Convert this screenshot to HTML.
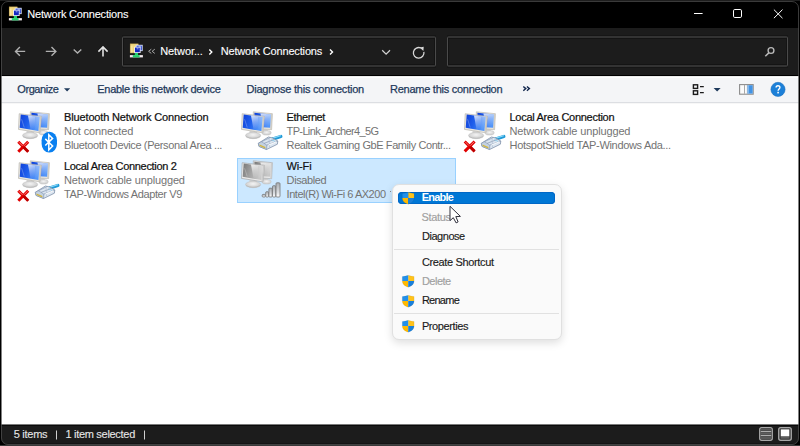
<!DOCTYPE html>
<html><head><meta charset="utf-8">
<style>
html,body{margin:0;padding:0;}
body{width:800px;height:446px;position:relative;overflow:hidden;background:#000000;font-family:"Liberation Sans",sans-serif;}
.t{position:absolute;white-space:nowrap;line-height:11px;font-family:"Liberation Sans",sans-serif;}
.abs{position:absolute;}
#clip{position:absolute;left:0;top:0;width:800px;height:446px;clip-path:inset(1px 1px 1px 1px round 7px);}
svg{position:absolute;overflow:visible;}
</style></head>
<body>
<svg width="0" height="0" style="position:absolute">
 <defs>
  <linearGradient id="scr" x1="0" y1="0" x2="1" y2="0.3">
   <stop offset="0" stop-color="#1040d8"/>
   <stop offset="0.5" stop-color="#1f5fec"/>
   <stop offset="1" stop-color="#4a90f8"/>
  </linearGradient>
  <linearGradient id="scrg" x1="0" y1="0" x2="1" y2="0.3">
   <stop offset="0" stop-color="#777777"/>
   <stop offset="0.5" stop-color="#a2a2a2"/>
   <stop offset="1" stop-color="#c4c4c4"/>
  </linearGradient>
  <linearGradient id="glare" x1="0" y1="0" x2="0.25" y2="1">
   <stop offset="0" stop-color="#ffffff" stop-opacity="0.85"/>
   <stop offset="0.5" stop-color="#ffffff" stop-opacity="0.4"/>
   <stop offset="1" stop-color="#ffffff" stop-opacity="0.05"/>
  </linearGradient>
  <linearGradient id="glare2" x1="0" y1="0" x2="0" y2="1">
   <stop offset="0" stop-color="#ffffff" stop-opacity="0.45"/>
   <stop offset="1" stop-color="#ffffff" stop-opacity="0.0"/>
  </linearGradient>
  <linearGradient id="frm" x1="0" y1="0" x2="0" y2="1">
   <stop offset="0" stop-color="#f2f2f2"/>
   <stop offset="1" stop-color="#cfcfcf"/>
  </linearGradient>
  <radialGradient id="stand" cx="0.5" cy="0.4" r="0.6">
   <stop offset="0" stop-color="#f4f4f4"/>
   <stop offset="1" stop-color="#c8c8c8"/>
  </radialGradient>
  <linearGradient id="bar" x1="0" y1="0" x2="0" y2="1">
   <stop offset="0" stop-color="#a9adb2"/>
   <stop offset="0.7" stop-color="#dde0e3"/>
   <stop offset="1" stop-color="#ffffff"/>
  </linearGradient>
  <g id="mons">
   <!-- back stand -->
   <path d="M22.5,18 L26.5,18.3 L27,20.8 L22,20.8 Z" fill="#d2d2d2"/>
   <ellipse cx="25.6" cy="21.8" rx="4.6" ry="2.3" fill="url(#stand)" stroke="#c4c4c4" stroke-width="0.5"/>
   <!-- back monitor -->
   <polygon points="12.3,0.8 31.4,2.7 30.6,18.7 12.3,17.5" fill="#e6e4de" stroke="#b3b0a8" stroke-width="0.6"/>
   <polygon points="30,2.6 31.4,2.7 30.6,18.7 29.3,18.5" fill="#cfccc4"/>
   <polygon points="13.4,1.7 29.9,3.5 29.1,16.8 13.5,15.8" fill="url(#scr)"/>
   <polygon points="19.5,2.4 29.9,3.5 29.1,16.8 21.5,16.3" fill="url(#glare)"/>
   <!-- front stand -->
   <path d="M8.6,20 L16,20.7 L16.4,23 L8.4,22.8 Z" fill="#d4d4d4"/>
   <ellipse cx="12.1" cy="24.5" rx="7.6" ry="3.2" fill="url(#stand)" stroke="#c2c2c2" stroke-width="0.5"/>
   <path d="M5,25.6 Q12.1,29 19.2,25.6" stroke="#b6b6b6" stroke-width="0.7" fill="none"/>
   <!-- front monitor -->
   <polygon points="1.2,2.7 23.4,5.4 21.8,21.8 0.5,18.4" fill="#e9e7e1" stroke="#aeaba3" stroke-width="0.6"/>
   <polygon points="21.9,5.3 23.4,5.4 21.8,21.8 20.4,21.6" fill="#cdcac2"/>
   <polygon points="2.7,3.6 21.6,6.1 20.4,20.1 1.7,16.8" fill="url(#scr)"/>
   <polygon points="10,4.6 17.5,5.6 16.8,19.6 12.6,18.9" fill="url(#glare)"/>
   <polygon points="17.5,5.6 21.6,6.1 20.4,20.1 16.8,19.6" fill="url(#glare2)"/>
   <path d="M3.6,8.2 L6.2,16.4" stroke="#ffffff" stroke-width="0.7" opacity="0.35"/>
  </g>
  <g id="monsg">
   <!-- back stand -->
   <path d="M22.5,18 L26.5,18.3 L27,20.8 L22,20.8 Z" fill="#d2d2d2"/>
   <ellipse cx="25.6" cy="21.8" rx="4.6" ry="2.3" fill="url(#stand)" stroke="#c4c4c4" stroke-width="0.5"/>
   <!-- back monitor -->
   <polygon points="12.3,0.8 31.4,2.7 30.6,18.7 12.3,17.5" fill="#e8e8e8" stroke="#a2a2a2" stroke-width="0.6"/>
   <polygon points="30,2.6 31.4,2.7 30.6,18.7 29.3,18.5" fill="#cccccc"/>
   <polygon points="13.4,1.7 29.9,3.5 29.1,16.8 13.5,15.8" fill="url(#scrg)"/>
   <polygon points="19.5,2.4 29.9,3.5 29.1,16.8 21.5,16.3" fill="url(#glare)"/>
   <!-- front stand -->
   <path d="M8.6,20 L16,20.7 L16.4,23 L8.4,22.8 Z" fill="#d4d4d4"/>
   <ellipse cx="12.1" cy="24.5" rx="7.6" ry="3.2" fill="url(#stand)" stroke="#c2c2c2" stroke-width="0.5"/>
   <path d="M5,25.6 Q12.1,29 19.2,25.6" stroke="#b6b6b6" stroke-width="0.7" fill="none"/>
   <!-- front monitor -->
   <polygon points="1.2,2.7 23.4,5.4 21.8,21.8 0.5,18.4" fill="#ececec" stroke="#9c9c9c" stroke-width="0.6"/>
   <polygon points="21.9,5.3 23.4,5.4 21.8,21.8 20.4,21.6" fill="#cacaca"/>
   <polygon points="2.7,3.6 21.6,6.1 20.4,20.1 1.7,16.8" fill="url(#scrg)"/>
   <polygon points="10,4.6 17.5,5.6 16.8,19.6 12.6,18.9" fill="url(#glare)"/>
   <polygon points="17.5,5.6 21.6,6.1 20.4,20.1 16.8,19.6" fill="url(#glare2)"/>
   <path d="M3.6,8.2 L6.2,16.4" stroke="#ffffff" stroke-width="0.7" opacity="0.35"/>
  </g>

  <g id="xmark">
   <path d="M1.3,1.3 L11.2,11.2 M11.2,1.3 L1.3,11.2" stroke="#ffffff" stroke-width="4.2" opacity="0.6"/>
   <path d="M1.3,1.3 L11.2,11.2 M11.2,1.3 L1.3,11.2" stroke="#e10000" stroke-width="3"/>
   <path d="M6.6,6.6 L11.2,11.2" stroke="#b80000" stroke-width="2.2"/>
   <path d="M1.9,1.7 L5.6,5.4 M10.6,1.7 L6.9,5.4" stroke="#ffb0b0" stroke-width="0.8" opacity="0.85"/>
  </g>
  <g id="plug">
   <path d="M31.5,28.6 L39.8,26.0" stroke="#1f9ad8" stroke-width="3.4" stroke-linecap="round"/>
   <path d="M32,27.6 L39.6,25.3" stroke="#8bd8f8" stroke-width="1.1" stroke-linecap="round"/>
   <polygon points="17.3,32.8 27.4,26.5 31.4,27.4 36.8,30.5 36.4,33.7 25.6,39 18,35.9" fill="#dbe5f0" stroke="#7b8ca5" stroke-width="0.75"/>
   <polygon points="17.3,32.8 20.5,31.2 25.8,34.6 25.6,39 18,35.9" fill="#c3d1e2" stroke="#7386a2" stroke-width="0.5"/>
   <polygon points="18.5,34.0 24.4,36.4 24.3,38.0 18.6,35.6" fill="#d2b640"/>
   <path d="M20.5,31.2 L29.2,27 M25.8,34.6 L36.8,30.5 M23,32.9 L33.5,28.8" stroke="#8596b0" stroke-width="0.7" fill="none"/>
   <path d="M28,28 L28.6,36.6" stroke="#a9b8cc" stroke-width="0.6"/>
   <path d="M27.5,34.5 L35.5,31.2" stroke="#ffffff" stroke-width="1.1" opacity="0.9"/>
   <path d="M30.3,29.2 L34,30.9" stroke="#6fc6ec" stroke-width="0.8" opacity="0.8"/>
  </g>
  <g id="shield">
   <path d="M6.2,0.3 Q9,1.3 12.1,1.5 L12.1,6 L6.2,6 Z" fill="#ffc21a"/>
   <path d="M6.2,0.3 Q3.4,1.3 0.3,1.5 L0.3,6 L6.2,6 Z" fill="#2290ea"/>
   <path d="M6.2,6 L0.3,6 C0.4,9.4 2.8,11.1 6.2,12.2 Z" fill="#ffb900"/>
   <path d="M6.2,6 L12.1,6 C12,9.4 9.6,11.1 6.2,12.2 Z" fill="#1a80da"/>
   <path d="M6.2,0.3 Q9,1.3 12.1,1.5 L12.1,6 C12,9.4 9.6,11.1 6.2,12.2 C2.8,11.1 0.4,9.4 0.3,6 L0.3,1.5 Q3.4,1.3 6.2,0.3 Z" fill="none" stroke="#000" stroke-opacity="0.12" stroke-width="0.5"/>
  </g>
  <g id="netico">
   <rect x="0.2" y="-0.1" width="8" height="9" fill="#f0d67e" stroke="#cfae55" stroke-width="0.5"/>
   <rect x="0.6" y="1.6" width="2" height="7" fill="#fbeaa8" opacity="0.7"/>
   <rect x="5.7" y="0.8" width="7" height="6.3" fill="#d7e0f4"/>
   <rect x="6.6" y="1.7" width="5.3" height="4.6" fill="#2f47d3"/>
   <rect x="8.6" y="2.1" width="2.6" height="1.4" fill="#8fa3ee"/>
   <rect x="4.2" y="2.8" width="6.4" height="6.2" fill="#eef2fb"/>
   <rect x="5" y="3.6" width="4.8" height="4.6" fill="#1428c0"/>
   <rect x="6.7" y="4.0" width="1.8" height="1.4" fill="#6f86e8"/>
   <rect x="4.8" y="9" width="3.2" height="2.3" fill="#22d06c"/>
   <rect x="-0.1" y="11.1" width="13" height="2.3" fill="#f2eaee"/>
   <rect x="2.8" y="11.1" width="6.8" height="2.3" fill="#22d06c"/>
  </g>
 </defs>
</svg>

<div id="clip">
 <!-- title bar -->
 <div class="abs" style="left:0;top:0;width:800px;height:28px;background:#000000"></div>
 <!-- nav bar -->
 <div class="abs" style="left:0;top:28px;width:800px;height:47px;background:#1c1c1c"></div>
 <div class="abs" style="left:0;top:75px;width:800px;height:1px;background:#000000"></div>
 <!-- toolbar -->
 <div class="abs" style="left:0;top:76px;width:800px;height:26px;background:#f4f5f7;border-bottom:1px solid #dcdee2"></div>
 <div class="abs" style="left:0;top:76px;width:800px;height:1px;background:#ececec"></div>
 <div class="abs" style="left:0;top:77px;width:800px;height:1px;background:#fdfdfd"></div>
 <!-- content -->
 <div class="abs" style="left:0;top:103px;width:800px;height:321px;background:#ffffff"></div>
 <div class="abs" style="left:0;top:103px;width:800px;height:1px;background:#f7f7f7"></div>
 <!-- status bar -->
 <div class="abs" style="left:0;top:424px;width:800px;height:22px;background:#1c1c1c"></div>
 <div class="abs" style="left:0;top:424px;width:800px;height:1px;background:#7a7a7a"></div>
 <div class="abs" style="left:0;top:425px;width:800px;height:1px;background:#0a0a0a"></div>
 <div class="abs" style="left:0;top:443px;width:800px;height:1px;background:#151515"></div>

 <!-- title icon -->
 <svg style="left:9px;top:7px" width="14" height="14"><use href="#netico"/></svg>
 <!-- window controls -->
 <svg style="left:0;top:0" width="800" height="28">
  <line x1="694" y1="13.5" x2="702.6" y2="13.5" stroke="#ffffff" stroke-width="1"/>
  <rect x="733.5" y="9.5" width="8" height="8" rx="1.3" fill="none" stroke="#ffffff" stroke-width="1"/>
  <path d="M773.9,9.6 L782.5,18.2 M782.5,9.6 L773.9,18.2" stroke="#ffffff" stroke-width="1"/>
 </svg>

 <!-- nav icons -->
 <svg style="left:0;top:28px" width="800" height="48">
  <g transform="translate(0,-28)">
   <path d="M15.6,51.4 L25.2,51.4 M19.9,47 L15.5,51.4 L19.9,55.8" stroke="#b0b0b0" stroke-width="1.4" fill="none"/>
   <path d="M45.8,51.4 L55.8,51.4 M51.5,47 L55.9,51.4 L51.5,55.8" stroke="#b0b0b0" stroke-width="1.4" fill="none"/>
   <path d="M73.7,49.4 L77.5,53.1 L81.3,49.4" stroke="#b0b0b0" stroke-width="1.4" fill="none"/>
   <path d="M103,47.2 L103,56.6 M98.4,51.6 L103,47 L107.6,51.6" stroke="#e2e2e2" stroke-width="1.6" fill="none"/>
   <!-- address box -->
   <rect x="122" y="35" width="314" height="1" fill="#161616"/>
   <rect x="122" y="67" width="314" height="1" fill="#161616"/>
   <rect x="122.5" y="37" width="313" height="29" rx="1" fill="#1c1c1c" stroke="#4a4a4a" stroke-width="1"/>
   <rect x="123.5" y="38.5" width="311" height="26" fill="none" stroke="#141414" stroke-width="1"/>
   <!-- search box -->
   <rect x="447" y="35" width="341" height="1" fill="#161616"/>
   <rect x="447" y="67" width="341" height="1" fill="#161616"/>
   <rect x="447.5" y="37" width="340" height="29" rx="1" fill="#1c1c1c" stroke="#4a4a4a" stroke-width="1"/>
   <rect x="448.5" y="38.5" width="338" height="26" fill="none" stroke="#141414" stroke-width="1"/>
   <!-- << -->
   <path d="M151.3,49.2 L148.6,51.3 L151.3,53.4 M154.8,49.2 L152.1,51.3 L154.8,53.4" stroke="#a8a8a8" stroke-width="1" fill="none"/>
   <!-- > separators -->
   <path d="M209.3,49.6 L211.8,52 L209.3,54.4" stroke="#ffffff" stroke-width="1.4" fill="none"/>
   <path d="M330,49.6 L332.5,52 L330,54.4" stroke="#ffffff" stroke-width="1.4" fill="none"/>
   <!-- dropdown -->
   <path d="M382.2,50.3 L386.1,54.1 L390,50.3" stroke="#d0d0d0" stroke-width="1.3" fill="none"/>
   <!-- refresh -->
   <path d="M420.9,48.0 A5.3,5.3 0 1 0 423.9,51.9" stroke="#d8d8d8" stroke-width="1.3" fill="none"/>
   <path d="M419.6,47.4 L423.7,46.7 L423.4,50.9 Z" fill="#d8d8d8"/>
   <!-- search -->
   <circle cx="771" cy="50.5" r="2.9" stroke="#b8b8b8" stroke-width="1.4" fill="none"/>
   <path d="M769,52.6 L765.3,56.3" stroke="#b8b8b8" stroke-width="1.5"/>
  </g>
 </svg>
 <svg style="left:130px;top:43.7px" width="14" height="14"><use href="#netico"/></svg>

 <!-- toolbar icons -->
 <svg style="left:0;top:76px" width="800" height="26">
  <g transform="translate(0,-76)">
   <path d="M64,88.3 L70.2,88.3 L67.1,91.4 Z" fill="#1e395b"/>
   <path d="M523.3,86.5 L525.8,88.6 L523.3,90.8 M526.9,86.5 L529.4,88.6 L526.9,90.8" stroke="#13284e" stroke-width="1.4" fill="none"/>
   <!-- view icon -->
   <rect x="693.4" y="84.8" width="4.2" height="3.6" fill="none" stroke="#1a1a1a" stroke-width="1.4"/>
   <rect x="693.4" y="90.8" width="4.2" height="3.6" fill="none" stroke="#1a1a1a" stroke-width="1.4"/>
   <line x1="700" y1="86.6" x2="703.8" y2="86.6" stroke="#1a1a1a" stroke-width="1.2"/>
   <line x1="700" y1="92.6" x2="703.8" y2="92.6" stroke="#1a1a1a" stroke-width="1.2"/>
   <path d="M713.6,88 L720.6,88 L717.1,91.5 Z" fill="#1e395b"/>
   <!-- preview pane -->
   <rect x="739.6" y="84.6" width="13.6" height="9.6" fill="#fbfbfb" stroke="#8c8c8c" stroke-width="1.1"/>
   <rect x="744" y="85" width="1" height="8.8" fill="#a8a8a8"/>
   <rect x="746.9" y="85" width="0.8" height="8.8" fill="#a8a8a8"/>
   <rect x="747.6" y="85.2" width="5.1" height="8.4" fill="#4293e4"/>
   <rect x="747.6" y="85.2" width="1.2" height="8.4" fill="#8fc0f0"/>
   <!-- help -->
   <circle cx="778" cy="89.4" r="7.1" fill="#1c80d8"/>
   <circle cx="778" cy="89.4" r="7.1" fill="none" stroke="#1568b8" stroke-width="0.5"/>
   <path d="M776.1,87.5 C776.1,85.2 779.9,85.2 779.9,87.4 C779.9,89 778.1,89 778.1,90.8" stroke="#ffffff" stroke-width="1.4" fill="none"/>
   <rect x="777.3" y="91.8" width="1.6" height="1.6" fill="#ffffff"/>
  </g>
 </svg>

 <!-- selection -->
 <div class="abs" style="left:237px;top:158px;width:217px;height:43px;background:#cce8ff;border:1px solid #99d1ff"></div>

 <!-- item icons -->
 <svg style="left:18px;top:110.5px" width="45" height="45"><use href="#mons" transform="translate(0,0)"/><use href="#xmark" transform="translate(-1,29.5)"/><g transform="translate(0,-0.5)"><g id="bt"><rect x="23.6" y="21.2" width="15.4" height="20.7" rx="7.4" ry="8.6" fill="#0a80f0"/>
<path d="M27.3,28.4 L34.6,35.5 L30.8,39.4 L30.8,24.2 L34.6,27.9 L27.3,35" stroke="#ffffff" stroke-width="1.5" fill="none" stroke-linejoin="miter" stroke-miterlimit="6"/></g></g></svg>
<svg style="left:241.2px;top:110.5px" width="45" height="45"><use href="#mons" transform="translate(0,0)"/><use href="#plug" transform="translate(0,-0.5)"/></svg>
<svg style="left:463.6px;top:110.5px" width="45" height="45"><use href="#mons" transform="translate(0,0)"/><use href="#xmark" transform="translate(-0.6,29.2)"/><use href="#plug" transform="translate(0,-0.5)"/></svg>
<svg style="left:18px;top:159.5px" width="45" height="45"><use href="#mons" transform="translate(0,0)"/><use href="#xmark" transform="translate(-1,29.5)"/><use href="#plug" transform="translate(0,-0.5)"/></svg>
<svg style="left:241.4px;top:159.5px" width="45" height="45"><use href="#monsg" transform="translate(0,0)"/><g transform="translate(0,-0.5)"><g id="bars"><rect x="21.2" y="34.9" width="3.2" height="2.6000000000000014" rx="0.9" fill="url(#bar)" stroke="#747474" stroke-width="0.8"/><rect x="24.7" y="32.2" width="3.0" height="5.299999999999997" rx="0.9" fill="url(#bar)" stroke="#747474" stroke-width="0.8"/><rect x="27.9" y="28.7" width="3.3" height="8.8" rx="0.9" fill="url(#bar)" stroke="#747474" stroke-width="0.8"/><rect x="31.5" y="26.2" width="3.3" height="11.3" rx="0.9" fill="url(#bar)" stroke="#747474" stroke-width="0.8"/><rect x="35.0" y="23.3" width="4.0" height="14.2" rx="0.9" fill="url(#bar)" stroke="#747474" stroke-width="0.8"/></g></g></svg>

<div class="t" style="left:27.20px;top:8.99px;color:#ffffff;font-size:11px;font-weight:400;letter-spacing:-0.186px;-webkit-text-stroke:0.1px #ffffff">Network Connections</div>
<div class="t" style="left:160.20px;top:45.69px;color:#ffffff;font-size:11px;font-weight:400;letter-spacing:-0.088px;-webkit-text-stroke:0.1px #ffffff">Networ...</div>
<div class="t" style="left:220.70px;top:45.69px;color:#ffffff;font-size:11px;font-weight:400;letter-spacing:-0.164px;-webkit-text-stroke:0.1px #ffffff">Network Connections</div>
<div class="t" style="left:17.30px;top:84.09px;color:#1e395b;font-size:11px;font-weight:400;letter-spacing:-0.433px;-webkit-text-stroke:0.25px #1e395b">Organize</div>
<div class="t" style="left:97.30px;top:84.09px;color:#1e395b;font-size:11px;font-weight:400;letter-spacing:-0.294px;-webkit-text-stroke:0.25px #1e395b">Enable this network device</div>
<div class="t" style="left:246.50px;top:84.09px;color:#1e395b;font-size:11px;font-weight:400;letter-spacing:-0.227px;-webkit-text-stroke:0.25px #1e395b">Diagnose this connection</div>
<div class="t" style="left:390.00px;top:84.09px;color:#1e395b;font-size:11px;font-weight:400;letter-spacing:-0.258px;-webkit-text-stroke:0.25px #1e395b">Rename this connection</div>
<div class="t" style="left:64.10px;top:111.89px;color:#111111;font-size:11px;font-weight:400;letter-spacing:-0.155px;-webkit-text-stroke:0.22px #111111">Bluetooth Network Connection</div>
<div class="t" style="left:64.10px;top:125.89px;color:#737373;font-size:11px;font-weight:400;letter-spacing:-0.145px">Not connected</div>
<div class="t" style="left:64.10px;top:139.59px;color:#737373;font-size:11px;font-weight:400;letter-spacing:-0.380px">Bluetooth Device (Personal Area ...</div>
<div class="t" style="left:286.60px;top:111.89px;color:#111111;font-size:11px;font-weight:400;letter-spacing:-0.398px;-webkit-text-stroke:0.22px #111111">Ethernet</div>
<div class="t" style="left:286.60px;top:125.89px;color:#737373;font-size:11px;font-weight:400;letter-spacing:-0.643px">TP-Link_Archer4_5G</div>
<div class="t" style="left:286.60px;top:139.59px;color:#737373;font-size:11px;font-weight:400;letter-spacing:-0.409px">Realtek Gaming GbE Family Contr...</div>
<div class="t" style="left:509.50px;top:111.89px;color:#111111;font-size:11px;font-weight:400;letter-spacing:-0.282px;-webkit-text-stroke:0.22px #111111">Local Area Connection</div>
<div class="t" style="left:509.50px;top:125.89px;color:#737373;font-size:11px;font-weight:400;letter-spacing:-0.143px">Network cable unplugged</div>
<div class="t" style="left:509.50px;top:139.59px;color:#737373;font-size:11px;font-weight:400;letter-spacing:-0.316px">HotspotShield TAP-Windows Ada...</div>
<div class="t" style="left:64.00px;top:160.69px;color:#111111;font-size:11px;font-weight:400;letter-spacing:-0.317px;-webkit-text-stroke:0.22px #111111">Local Area Connection 2</div>
<div class="t" style="left:64.00px;top:174.69px;color:#737373;font-size:11px;font-weight:400;letter-spacing:-0.143px">Network cable unplugged</div>
<div class="t" style="left:64.00px;top:188.69px;color:#737373;font-size:11px;font-weight:400;letter-spacing:-0.379px">TAP-Windows Adapter V9</div>
<div class="t" style="left:286.60px;top:160.69px;color:#111111;font-size:11px;font-weight:400;letter-spacing:-0.163px;-webkit-text-stroke:0.22px #111111">Wi-Fi</div>
<div class="t" style="left:286.60px;top:174.69px;color:#737373;font-size:11px;font-weight:400;letter-spacing:-0.400px">Disabled</div>
<div class="t" style="left:286.60px;top:188.69px;color:#737373;font-size:11px;font-weight:400;letter-spacing:-0.477px">Intel(R) Wi-Fi 6 AX200</div>
<div class="t" style="left:13.70px;top:429.09px;color:#e6e6e6;font-size:11px;font-weight:400;letter-spacing:-0.259px;-webkit-text-stroke:0.1px #e6e6e6">5 items</div>
<div class="t" style="left:65.40px;top:429.09px;color:#e6e6e6;font-size:11px;font-weight:400;letter-spacing:-0.292px;-webkit-text-stroke:0.1px #e6e6e6">1 item selected</div>

 <!-- status bar separators and icons -->
 <svg style="left:0;top:424px" width="800" height="22">
  <g transform="translate(0,-424)">
   <line x1="56.5" y1="430.5" x2="56.5" y2="439.5" stroke="#d0d0d0" stroke-width="1"/>
   <line x1="144.5" y1="430.5" x2="144.5" y2="439.5" stroke="#d0d0d0" stroke-width="1"/>
   <rect x="759.7" y="427.7" width="12.6" height="12.6" rx="2" fill="#303030" stroke="#a8a8a8" stroke-width="1.3"/>
   <rect x="760.8" y="428.8" width="10.4" height="1.9" fill="#585858"/>
   <line x1="760.8" y1="431.7" x2="771.2" y2="431.7" stroke="#dcdcdc" stroke-width="0.9"/>
   <rect x="760.8" y="432.6" width="10.4" height="2.1" fill="#5e5e5e"/>
   <line x1="760.8" y1="435.7" x2="771.2" y2="435.7" stroke="#dcdcdc" stroke-width="0.9"/>
   <rect x="760.8" y="436.6" width="10.4" height="2.5" fill="#585858"/>
   <rect x="778.7" y="427.7" width="12.6" height="12.6" rx="2" fill="#3a3a3a" stroke="#a8a8a8" stroke-width="1.3"/>
   <rect x="780.8" y="429.4" width="8.5" height="7" fill="#ffffff"/>
   <rect x="780.8" y="436.7" width="8.5" height="2" fill="#5e5e5e"/>
  </g>
 </svg>

 <div class="abs" style="left:389.6px;top:190.6px;width:1.6px;height:1.2px;background:#8a8a8a"></div>
 <!-- context menu -->
 <div class="abs" style="left:391.5px;top:184px;width:168px;height:154px;background:#fafafa;border:1px solid #e0e0e0;border-radius:7px;box-shadow:0 3px 9px rgba(0,0,0,0.13)"></div>
 <div class="abs" style="left:398px;top:192px;width:157px;height:12px;background:#0077d5;border-radius:4px;box-shadow:inset 0 0 0 1px #0067c6"></div>
 <div class="abs" style="left:394px;top:249px;width:165px;height:1px;background:#e1e1e1"></div>
 <div class="abs" style="left:394px;top:313px;width:165px;height:1px;background:#e1e1e1"></div>
 <svg style="left:401.8px;top:192px" width="13" height="13"><use href="#shield"/></svg>
 <svg style="left:401.8px;top:275px" width="13" height="13"><use href="#shield"/></svg>
 <svg style="left:401.8px;top:294.5px" width="13" height="13"><use href="#shield"/></svg>
 <svg style="left:401.8px;top:319.7px" width="13" height="13"><use href="#shield"/></svg>
<div class="t" style="left:421.80px;top:191.89px;color:#ffffff;font-size:11px;font-weight:700;letter-spacing:-0.813px">Enable</div>
<div class="t" style="left:421.60px;top:211.99px;color:#a0a0a0;font-size:11px;font-weight:400;letter-spacing:-0.337px;-webkit-text-stroke:0.15px #a0a0a0">Status</div>
<div class="t" style="left:422.00px;top:231.29px;color:#1a1a1a;font-size:11px;font-weight:400;letter-spacing:-0.468px;-webkit-text-stroke:0.15px #1a1a1a">Diagnose</div>
<div class="t" style="left:421.90px;top:256.59px;color:#1a1a1a;font-size:11px;font-weight:400;letter-spacing:-0.353px;-webkit-text-stroke:0.15px #1a1a1a">Create Shortcut</div>
<div class="t" style="left:421.90px;top:275.59px;color:#a0a0a0;font-size:11px;font-weight:400;letter-spacing:-0.499px;-webkit-text-stroke:0.15px #a0a0a0">Delete</div>
<div class="t" style="left:421.90px;top:294.99px;color:#1a1a1a;font-size:11px;font-weight:400;letter-spacing:-0.736px;-webkit-text-stroke:0.15px #1a1a1a">Rename</div>
<div class="t" style="left:421.90px;top:320.89px;color:#1a1a1a;font-size:11px;font-weight:400;letter-spacing:-0.393px;-webkit-text-stroke:0.15px #1a1a1a">Properties</div>
 <!-- cursor -->
 <svg style="left:449.5px;top:205.8px" width="14" height="20">
  <path d="M0,0.3 L0,14.6 L3.3,11.7 L6.1,16.9 L8.1,15.9 L5.8,10.6 L10.4,10.4 Z" fill="#ffffff" stroke="#30303c" stroke-width="1" stroke-linejoin="round"/>
 </svg>
</div>
<!-- window border -->
<div class="abs" style="left:0;top:0;width:800px;height:1px;background:#1e1e1e"></div>
<div class="abs" style="left:1px;top:1px;width:798px;height:444px;box-sizing:border-box;border:1px solid rgba(80,80,80,0.72);border-radius:7px;pointer-events:none"></div>
<div class="abs" style="left:0;top:445px;width:800px;height:1px;background:#3a3a3a"></div>
</body></html>
